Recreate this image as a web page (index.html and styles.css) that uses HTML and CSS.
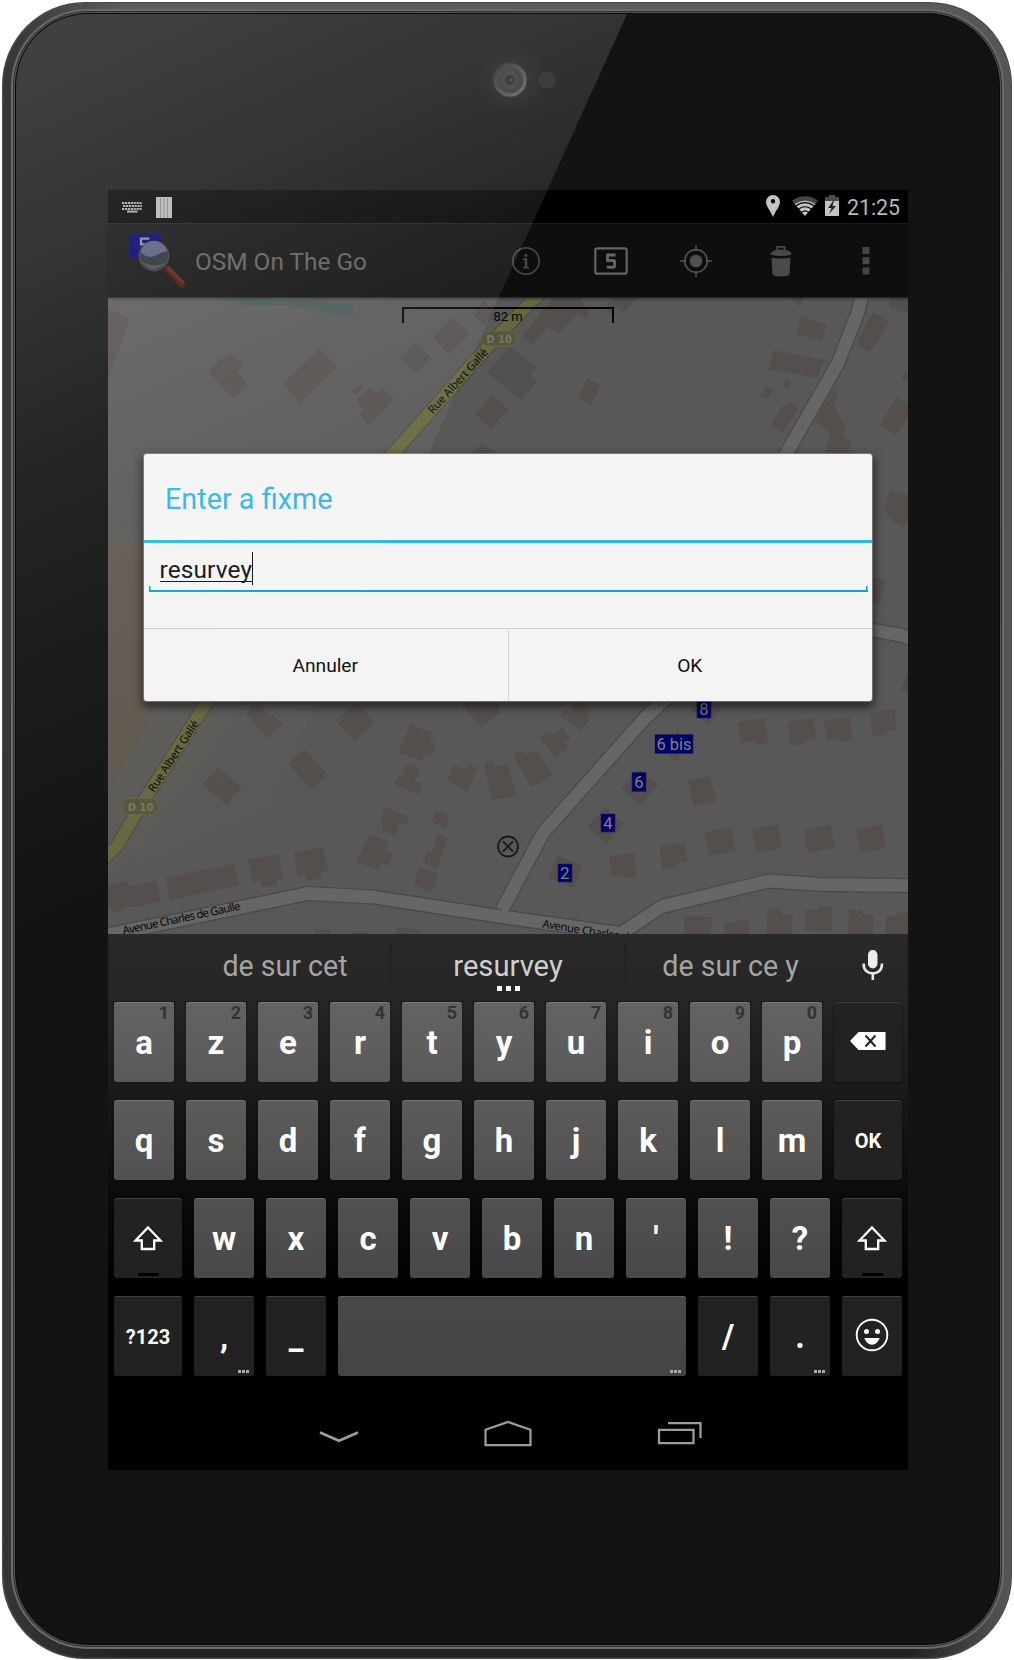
FILE: index.html
```html
<!DOCTYPE html>
<html lang="fr">
<head>
<meta charset="utf-8">
<title>OSM On The Go</title>
<link rel="stylesheet" href="styles.css">
</head>
<body>
<div class="tablet">
<div class="bezel">
<div class="glass">
  <div class="camera-row">
    <svg class="camera" width="120" height="100" viewBox="450 30 120 100">
      <defs>
        <radialGradient id="halo"><stop offset=".4" stop-color="#fff" stop-opacity=".04"/><stop offset="1" stop-color="#fff" stop-opacity="0"/></radialGradient>
        <linearGradient id="lensRing" x1="0" y1="0" x2="1" y2="1"><stop offset="0" stop-color="#262626"/><stop offset=".35" stop-color="#3a3a3a"/><stop offset="1" stop-color="#626262"/></linearGradient>
      </defs>
      <circle cx="512" cy="80" r="34" fill="url(#halo)"/>
      <circle cx="510" cy="80" r="17.5" fill="#262626"/>
      <circle cx="510" cy="80" r="15" fill="#333" stroke="url(#lensRing)" stroke-width="3"/>
      <circle cx="510" cy="80" r="10" fill="#363636" stroke="#2c2c2c"/>
      <circle cx="510" cy="80" r="4.5" fill="#1e1e1e"/>
      <circle cx="511" cy="80" r="2" fill="#383838"/>
      <circle cx="547" cy="80" r="8.5" fill="#212121"/>
    </svg>
  </div>

  <div class="screen">
    <header class="status">
      <svg class="st-kbd" width="20" height="12" viewBox="0 0 20 12" fill="none" stroke="#a6a6a6" stroke-width="2">
        <path d="M0 2h20" stroke-dasharray="2.2 .7"/><path d="M1 5h19" stroke-dasharray="2.2 .7"/><path d="M0 8h20" stroke-dasharray="2.2 .7"/><path d="M5 10.6h10.500"/>
      </svg>
      <svg class="st-bars" width="16" height="21" viewBox="0 0 16 21"><path fill="#b4b4b4" d="M0 0h16v21H0z"/><path stroke="#777" stroke-width=".8" d="M4.500 1v20M8 1v20M11.500 1v20"/></svg>
      <span class="spacer"></span>
      <svg class="st-pin" width="14" height="22" viewBox="0 0 14 22"><path fill="#c4c4c4" fill-rule="evenodd" d="M7 0a7 7 0 0 1 7 7c0 4-4 8-7 15C4 15 0 11 0 7a7 7 0 0 1 7-7zm0 4a2.200 2.200 0 1 0 0 4.400A2.200 2.200 0 0 0 7 4z"/></svg>
      <svg class="st-wifi" width="26" height="20" viewBox="0 0 26 20">
        <path fill="#454545" d="M0 4.500Q13-4 26 4.500L23 8.500Q13 1 3 8.500z"/>
        <path fill="#c4c4c4" d="M2.700 8Q13 .8 23.300 8L13 20z"/>
        <path fill="none" stroke="#000" stroke-width="1.200" d="M4 9.800Q13 3.500 22 9.800M6.700 13Q13 8.500 19.300 13M9.500 16.300Q13 13.500 16.500 16.300"/>
      </svg>
      <svg class="st-batt" width="14" height="21" viewBox="0 0 14 21"><path fill="#4a4a4a" d="M4 0h6v2h4v5H0V2h4z"/><path fill="#c4c4c4" d="M0 6h14v15H0z"/><path fill="#222" d="M9.500 4 3 13h3.500L4 19l7-8H7.500z"/></svg>
      <span class="clock">21:25</span>
    </header>

    <div class="actionbar">
      <svg class="app-icon" width="62" height="60" viewBox="78 150 186 180">
        <rect x="85" y="159" width="100" height="78" rx="4" fill="#00006a" stroke="#101018" stroke-width="4"/>
        <path d="M148 176h-25v17h20q5 0 5 7v12q0 8-8 8" fill="none" stroke="#858590" stroke-width="7"/>
        <circle cx="162" cy="228" r="44" fill="#272f33" fill-opacity=".93" stroke="#453733" stroke-width="4"/>
        <path d="M122 216a41 41 0 0 1 80-2q-20 3-34 12-24 14-46-10z" fill="#535c7c"/>
        <path d="M122 242q38 50 79 1-35 28-79-1z" fill="#434c50"/>
        <path d="M204 268l42 44" stroke="#3c1006" stroke-width="22" stroke-linecap="round"/>
        <path d="M205 264l43 44" stroke="#5a1e10" stroke-width="10" stroke-linecap="round"/>
      </svg>
      <span class="app-title">OSM On The Go</span>
      <span class="act"><svg width="30" height="30" viewBox="0 0 30 30"><circle cx="15" cy="15" r="13.200" fill="none" stroke="#474747" stroke-width="1.700"/><path fill="#474747" d="M13.700 8h2.600v2.800h-2.600zM12 12.300h4.200V21H18v1.500h-6V21h1.700v-7H12z"/></svg></span>
      <span class="act"><svg width="34" height="28" viewBox="0 0 34 28"><rect x="1.300" y="1.300" width="31.400" height="25.400" rx="2" fill="none" stroke="#646464" stroke-width="2.200"/><path d="M21.500 8h-8v5.500H19q1.700 0 1.700 1.800v3q0 1.900-1.700 1.900h-6.200" fill="none" stroke="#646464" stroke-width="2.900"/></svg></span>
      <span class="act"><svg width="32" height="32" viewBox="0 0 32 32"><circle cx="16" cy="16" r="11.300" fill="none" stroke="#505050" stroke-width="1.700"/><circle cx="16" cy="16" r="6.300" fill="#505050"/><path stroke="#505050" stroke-width="1.600" d="M16 0v6M16 26v6M0 16h6M26 16h6"/></svg></span>
      <span class="act"><svg width="22" height="32" viewBox="0 0 22 32"><path fill="#4a4a4a" fill-rule="evenodd" d="M6.500 5V1h9v4q6 1 6 4.500Q16 11 11 11T.5 9.500Q.5 6 6.500 5zM8.300 4.700h5.400V2.700H8.300z"/><path fill="#4a4a4a" d="M1.500 12.800q9.500 1.400 19 0L19.600 29q-1 2.500-8.600 2.500T2.400 29z"/></svg></span>
      <span class="act"><svg width="8" height="28" viewBox="0 0 8 28"><path fill="#454545" d="M.5 0h7v7h-7zM.5 10.300h7v7h-7zM.5 20.500h7v7h-7z"/></svg></span>
    </div>

    <main class="map-area">
      <svg class="map" width="800" height="636" viewBox="108 298 800 636">
        <path fill="#585858" d="M108 298h800v636H108z"/>
        <path fill="#5c5a57" d="M108 525 143 538 290 640 243 702 143 849 108 877z"/>
        <path fill="#5f584f" d="M108 545H205V640L160 702 108 792z"/>
        <g fill="#544e4d">
          <!-- north-west blocks -->
          <g transform="translate(100 180) scale(.33333)">
            <path fill="#475656" d="M360 354 440 378 570 376 705 402 772 402 742 370 560 358z"/>
            <path d="M24 388 90 414 24 600zM325 577 358 540 396 520 430 555 412 576 440 612 400 655zM548 612 658 507 710 562 602 670zM1000 472 1058 412 1108 462 1048 522zM770 658 812 622 828 640 852 628 882 662 805 735 778 702 790 688zM758 632 782 612 792 622 770 643zM1127 703 1178 645 1225 690 1172 747zM1118 405 1150 362 1190 400 1150 434zM1110 822 1148 789 1186 822z"/>
            <path fill="#52504e" d="M900 533 946 488 996 538 948 580z"/>
            <path fill="#505050" d="M1160 575 1230 500 1310 560 1290 590 1312 605 1262 662z"/>
          </g>
          <!-- north-east blocks -->
          <g transform="translate(500 180) scale(.33333)">
            <path d="M68 467 160 354 240 354 270 405 255 414 235 395 165 455 145 440 97 494zM320 380 340 354H415L370 400 350 380 330 405zM262 596 302 614 275 675 234 656zM0 665 24 688 0 712zM905 408 980 435 965 482 890 460zM820 510 974 540 950 594 807 568zM780 648 797 618 825 625 803 658zM813 735 845 680 875 667 894 685 850 757zM1118 397 1168 424 1128 490 1082 462zM1170 354H1224V398L1170 384zM1190 652 1224 668V715L1188 766 1140 735zM1218 570 1224 608 1204 595zM1000 628 1018 642 1000 672 1020 710 1037 745 1025 765 1055 785 1042 822H975L992 760 945 720zM868 354H912L900 380z"/>
            <path fill="#51504f" d="M165 455 218 405 235 395 180 460zM1082 462 1128 490 1112 515 1070 492zM855 598 870 606 866 630 852 622z"/>
          </g>
          <!-- east edge -->
          <g transform="translate(500 440) scale(.33333)">
            <path d="M985 0H1055L1040 28 1070 42H975zM1170 150 1224 164V235L1212 263Q1160 240 1160 210L1152 202zM1117 410 1158 420 1138 492 1117 486zM1224 695V762L1202 750zM220 810 232 784 272 810z"/>
          </g>
          <!-- south-west blocks -->
          <g transform="translate(100 680) scale(.33333)">
            <path d="M440 102 470 66 508 110 522 106 548 132 502 173zM708 122 768 66 826 128 764 183zM1083 70 1195 66 1198 98 1145 144zM930 132 997 158 986 184 1006 192 992 228 972 222 964 244 896 216zM565 250 614 208 683 285 634 329zM308 314 354 262 424 322 380 375zM918 252 961 268 944 303 967 312 958 343 882 314 895 285 908 287zM1060 254 1096 270 1106 254 1132 264 1103 335 1068 318 1043 298zM1152 250 1180 242 1186 260 1224 254 1230 350 1175 360zM855 382 929 411 918 437 900 430 884 468 844 450 850 430 840 424zM1010 392 1047 408 1036 443 994 426zM806 461 867 486 858 512 880 518 866 558 844 550 837 571 770 546zM1014 461 1044 474 1012 564 969 548 984 512 996 516zM960 562 1016 582 998 635 940 612zM582 518 668 500 685 570 665 576 666 594 620 603 614 584 594 588zM444 538 536 521 549 592 530 597 532 614 486 623 482 603 456 608zM198 592 402 551 416 616 210 660zM24 614 80 603 88 618 170 602 182 664 100 682 76 680 78 690 38 696 24 680zM645 748 690 750 692 762H645zM890 744 962 748V762H890zM758 756H808V762H758z"/>
          </g>
          <!-- south-east blocks -->
          <g transform="translate(500 680) scale(.33333)">
            <path d="M228 66 272 84 260 104 270 116 244 154 180 108 196 88 212 96zM118 176 140 155 162 166 184 143 212 174 194 190 204 200 170 232zM38 224 66 210 76 224 112 210 158 286 92 321zM0 262 24 255 50 345 0 354zM714 127 794 115 803 188 765 195 763 184 723 190zM862 126 940 115 949 178 912 182 914 190 873 197zM972 124 1050 110 1058 180 1022 186 1020 176 981 181zM1110 100 1184 88 1191 150 1158 156 1160 163 1118 170zM565 300 628 289 635 314 642 330 650 365 579 378 572 338zM575 90 600 66 668 80 622 138zM500 215 532 150 562 200 525 247zM364 326 418 266 475 314 420 375zM263 440 315 384 372 432 319 492zM172 525 246 556 220 622 145 594zM327 530 402 519 411 590 372 595 368 584 335 589zM479 498 556 486 563 545 528 550 530 562 487 569zM613 458 694 442 706 512 627 527zM756 448 834 432 846 504 768 518zM912 450 992 435 1004 504 923 520zM1068 447 1145 432 1158 504 1080 518zM555 706 637 712 632 762H552zM672 730 712 730V720L750 722 748 762H672zM804 685 845 690 843 702 878 706 874 762H798zM915 690 955 692V678L996 682V755L914 750zM1048 687 1086 692V702L1123 706 1118 762H1044zM1160 706 1195 708V698L1224 700V762H1155z"/>
          </g>
        </g>
        <g fill="none" stroke-linejoin="round">
          <path stroke="#484848" stroke-width="15.200" d="M863 290 858 312 838 363 786 454 771 480M872 630 900 635 912 639M682 684 645 718 543 833 502 910M100 936.500 308 893.500 373 897 500 916.500 625 934M620 934 662 906.500 769 881 820 884.300 912 885.700"/>
          <path stroke="#666" stroke-width="12.800" d="M863 290 858 312 838 363 786 454 771 480M872 630 900 635 912 639M682 684 645 718 543 833 502 910M100 936.500 308 893.500 373 897 500 916.500 625 934M620 934 662 906.500 769 881 820 884.300 912 885.700"/>
          <path stroke="#4a4a48" stroke-width="14" d="M541 292 500 333 393.500 453 371 478M218 684 207 702 143 802 117 846 100 862"/>
          <path stroke="#67673f" stroke-width="12" d="M541 292 500 333 393.500 453 371 478M218 684 207 702 143 802 117 846 100 862"/>
        </g>
        <g class="road-label">
          <text transform="translate(433 414.500) rotate(-48)" textLength="83">Rue Albert Gallé</text>
          <text transform="translate(154 793) rotate(-57)" textLength="83">Rue Albert Gallé</text>
          <text transform="translate(123.500 934.500) rotate(-12)" textLength="120">Avenue Charles de Gaulle</text>
          <text transform="translate(542 927.500) rotate(9)" textLength="127">Avenue Charles de Gaulle</text>
        </g>
        <g class="shield">
          <rect x="481" y="331" width="36" height="15" rx="7.500"/><text x="499" y="342.500">D 10</text>
          <rect x="121.500" y="798.500" width="37" height="16" rx="8"/><text x="140.500" y="811">D 10</text>
        </g>
        <g class="house">
          <rect x="697" y="700" width="14" height="18"/><text x="704" y="715">8</text>
          <rect x="655" y="734.500" width="38" height="19"/><text x="674" y="750">6 bis</text>
          <rect x="632" y="772.500" width="14" height="19"/><text x="639" y="788">6</text>
          <rect x="601" y="814" width="14" height="18"/><text x="608" y="829">4</text>
          <rect x="558" y="864" width="14" height="18"/><text x="565" y="879">2</text>
        </g>
        <g fill="none" stroke="#1b1b1b" stroke-width="1.800"><circle cx="508" cy="846.500" r="10"/><path d="M503 841.500l10 10M513 841.500l-10 10"/></g>
        <path fill="none" stroke="#050505" stroke-width="2" d="M403 323V308H613V323"/>
        <text class="scale" x="508" y="321">82 m</text>
      </svg>

      <section class="dialog">
        <h1 class="dialog-title">Enter a fixme</h1>
        <div class="dialog-body">
          <div class="field"><span class="value">resurvey</span><i class="caret"></i></div>
        </div>
        <div class="buttons"><span class="btn">Annuler</span><span class="btn">OK</span></div>
      </section>
    </main>

    <section class="keyboard">
      <div class="suggest">
        <span class="sg first">de sur cet</span>
        <span class="sg main">resurvey<svg class="dots" width="23" height="5" viewBox="0 0 23 5"><path fill="#fff" d="M0 0h5v5H0zM9 0h5v5H9zM18 0h5v5h-5z"/></svg></span>
        <span class="sg last">de sur ce y</span>
        <svg class="mic" width="22" height="30" viewBox="0 0 22 30"><rect x="6" y="0" width="9.500" height="18.500" rx="4.700" fill="#eee"/><path d="M1.700 13.500v1.200c0 11.500 18.200 11.500 18.200 0v-1.200M10.800 23.500V30" fill="none" stroke="#e6e6e6" stroke-width="2.600"/></svg>
      </div>
      <div class="row r1">
        <span class="key"><sup>1</sup>a</span><span class="key"><sup>2</sup>z</span><span class="key"><sup>3</sup>e</span><span class="key"><sup>4</sup>r</span><span class="key"><sup>5</sup>t</span><span class="key"><sup>6</sup>y</span><span class="key"><sup>7</sup>u</span><span class="key"><sup>8</sup>i</span><span class="key"><sup>9</sup>o</span><span class="key"><sup>0</sup>p</span>
        <span class="key fn wide icon"><svg width="36" height="18" viewBox="0 0 36 18"><path fill="#fff" d="M0 9 8.500 0H35.500v18H8.500z"/><path stroke="#222" stroke-width="2" d="M15.500 3.500l10 11M25.500 3.500l-10 11"/></svg></span>
      </div>
      <div class="row r2">
        <span class="key">q</span><span class="key">s</span><span class="key">d</span><span class="key">f</span><span class="key">g</span><span class="key">h</span><span class="key">j</span><span class="key">k</span><span class="key">l</span><span class="key">m</span><span class="key fn wide small">OK</span>
      </div>
      <div class="row r3">
        <span class="key fn wide shift"><svg width="32" height="26" viewBox="0 0 32 26"><path fill="none" stroke="#fff" stroke-width="2.300" d="M16 2.500 28.500 15.500H22.200V24H9.800V15.500H3.500z"/></svg></span><span class="key">w</span><span class="key">x</span><span class="key">c</span><span class="key">v</span><span class="key">b</span><span class="key">n</span><span class="key">'</span><span class="key">!</span><span class="key">?</span><span class="key fn shift"><svg width="32" height="26" viewBox="0 0 32 26"><path fill="none" stroke="#fff" stroke-width="2.300" d="M16 2.500 28.500 15.500H22.200V24H9.800V15.500H3.500z"/></svg></span>
      </div>
      <div class="row r4">
        <span class="key fn wide small">?123</span><span class="key fn more">,</span><span class="key fn">_</span><span class="key space more"></span><span class="key fn">/</span><span class="key fn more">.</span>
        <span class="key fn icon"><svg width="34" height="34" viewBox="0 0 34 34"><circle cx="17" cy="17" r="15.300" fill="none" stroke="#fff" stroke-width="1.900"/><circle cx="11.500" cy="13.500" r="2.500" fill="#fff"/><circle cx="22.500" cy="13.500" r="2.500" fill="#fff"/><path fill="#fff" d="M9.300 20h15.400q-2.500 6.700-7.700 6.700T9.300 20z"/></svg></span>
      </div>
    </section>

    <nav class="navbar">
      <svg class="hide-kbd" width="40" height="14" viewBox="0 0 40 14"><path fill="none" stroke="#9c9c9c" stroke-width="2.800" d="M1 2.500 20 10.800 39 2.500"/></svg>
      <svg width="48" height="27" viewBox="0 0 48 27"><path fill="none" stroke="#9c9c9c" stroke-width="2.200" d="M1.500 25.200V9.800L24 2l22.500 7.800v15.400z"/></svg>
      <svg width="46" height="24" viewBox="0 0 46 24"><path fill="none" stroke="#9c9c9c" stroke-width="2.300" d="M2 8.800h34.500v13.400H2zM11 2.200h32.500V17"/></svg>
    </nav>
  </div>
</div>
</div>
<svg class="gloss" width="1014" height="1660" viewBox="0 0 1014 1660">
  <defs>
    <linearGradient id="shine" gradientUnits="userSpaceOnUse" x1="0" y1="0" x2="351" y2="790">
      <stop offset="0" stop-color="#fff" stop-opacity=".205"/><stop offset=".28" stop-color="#fff" stop-opacity=".145"/><stop offset=".52" stop-color="#fff" stop-opacity=".075"/><stop offset=".77" stop-color="#fff" stop-opacity=".03"/><stop offset="1" stop-color="#fff" stop-opacity="0"/>
    </linearGradient>
  </defs>
  <path fill="url(#shine)" d="M88 14H627L90 1202 16 1366V86A72 72 0 0 1 88 14z"/>
</svg>
</div>
</body>
</html>
```

FILE: styles.css
```css
* { box-sizing: border-box; }
body {
  margin: 0;
  width: 1014px;
  height: 1660px;
  background: #fff;
  font-family: Roboto, "Liberation Sans", sans-serif;
  overflow: hidden;
}
svg { display: block; flex: none; }

/* Tablet shell */
.tablet { position: relative; width: 1014px; height: 1660px; padding: 2px; }
.bezel {
  height: 1657px;
  padding: 12px 13px 15px 14px;
  border-radius: 83px;
  background: linear-gradient(90deg, #343636, rgba(70,70,70,0) 12%, rgba(70,70,70,0) 90%, #565656),
              linear-gradient(180deg, #5c5c5c, #444 8%, #3a3a3a 90%, #222 99%);
  box-shadow: inset 0 0 0 1px #4a4a4a, inset 0 0 2px 1px #555;
}
.glass {
  height: 1630px;
  border-radius: 72px;
  background: #131313;
  box-shadow: 0 0 0 1px #0a0a0a, 0 0 0 2px #555, 0 0 0 3px #303030, 0 0 0 5px #6a6a6a;
  display: flex;
  flex-direction: column;
}
.camera-row { height: 176px; padding: 16px 0 0 434px; flex: none; }
.gloss { position: absolute; left: 0; top: 0; z-index: 2; pointer-events: none; }

.screen {
  width: 800px;
  height: 1280px;
  margin-left: 92px;
  display: flex;
  flex-direction: column;
  background: #000;
  flex: none;
}

/* Status bar */
.status { height: 33px; display: flex; align-items: center; padding: 1px 8px 0 14px; flex: none; }
.st-bars { margin-left: 14px; }
.spacer { flex: 1; }
.st-pin { margin: -3px 12px 0 0; }
.st-wifi { margin: -2px 7px 0 0; }
.st-batt { margin: -3px 8px 0 0; }
.clock { font-size: 21.300px; line-height: 32px; color: #b8b8b8; padding-top: 2px; }

/* Action bar */
.actionbar {
  height: 75px;
  display: flex;
  align-items: center;
  flex: none;
  background: #0e0e0e;
  border-top: 1px solid #1b1b1b;
  border-bottom: 1px solid #262626;
  box-shadow: 0 1px 3px rgba(0,0,0,.4);
  position: relative;
  z-index: 1;
}
.app-icon { margin: -1px 7px 0 18px; }
.app-title { flex: 1; font-size: 24.400px; color: #5e5e5e; padding-top: 2px; }
.act { width: 85px; display: flex; justify-content: center; }

/* Map */
.map-area { position: relative; height: 636px; flex: none; }
.road-label { font: 11.300px "Noto Sans", sans-serif; fill: #080808; }
.shield rect { fill: #56563a; stroke: #666645; stroke-width: 1; }
.shield text { font: bold 10px "DejaVu Sans", sans-serif; fill: #77776a; text-anchor: middle; }
.house rect { fill: #000066; stroke: #222255; stroke-width: .6; }
.house text { font-size: 16.500px; fill: #828282; text-anchor: middle; }
.scale { font-size: 13px; fill: #050505; text-anchor: middle; }

/* Dialog */
.dialog {
  position: absolute;
  left: 36px;
  top: 156px;
  width: 728px;
  height: 247px;
  border-radius: 3px;
  background: #f4f4f4;
  box-shadow: 0 0 1px 1px rgba(180,180,180,.5), 0 4px 10px 2px rgba(0,0,0,.6);
  display: flex;
  flex-direction: column;
}
.dialog-title {
  margin: 0;
  height: 89px;
  padding: 4px 0 0 21px;
  border-bottom: 3px solid #33b5e5;
  font-size: 28.800px;
  font-weight: 400;
  line-height: 82px;
  color: #33b5e5;
}
.dialog-body { height: 85px; padding: 9px 4.500px 0; }
.field {
  height: 40px;
  padding-left: 11px;
  display: flex;
  border-bottom: 2px solid #12a0d8;
  background: linear-gradient(#12a0d8, #12a0d8) 0 100%/1.500px 4px no-repeat,
              linear-gradient(#12a0d8, #12a0d8) 100% 100%/1.500px 4px no-repeat;
}
.value {
  font-size: 24.400px;
  letter-spacing: .15px;
  line-height: 36px;
  color: #111;
  height: 30px;
  border-bottom: 1.500px solid #111;
}
.caret { width: 1px; height: 33px; background: #111; }
.buttons { height: 73px; border-top: 1px solid #cfcfcf; display: flex; }
.btn { flex: 1; text-align: center; font-size: 19.200px; line-height: 74px; color: #111; padding-right: 1px; }
.btn + .btn { border-left: 1px solid #d4d4d4; }

/* Keyboard */
.keyboard {
  height: 462px;
  flex: none;
  background: linear-gradient(#292929 0, #262626 60px, #1a1a1a 155px, #0c0c0c 257px, #000 355px);
  padding: 0 6px;
}
.suggest { height: 68px; display: flex; align-items: flex-start; }
.sg {
  font-size: 28.600px;
  line-height: 47px;
  height: 43px;
  margin-top: 9px;
  text-align: center;
  color: #a4a4a4;
}
.first { width: 276px; padding-left: 66px; }
.main { width: 236px; border: solid #1d1d1d; border-width: 0 1px; color: #cfcfcf; font-size: 29.200px; }
.dots { margin: -4px auto 0; }
.last { width: 208px; padding-left: 1px; }
.mic { margin: 16px 0 0 28px; }
.row { height: 80px; margin-bottom: 18px; display: flex; gap: 12px; }
.key {
  position: relative;
  width: 60px;
  border-radius: 3px;
  display: flex;
  align-items: center;
  justify-content: center;
  font-size: 33px;
  font-weight: 700;
  color: #fff;
  padding-top: 1px;
  box-shadow: inset 0 1px 0 rgba(255,255,255,.14), 0 0 1px 1px rgba(0,0,0,.25);
}
.key sup { position: absolute; right: 5px; top: 2px; font-size: 18px; line-height: 18px; color: #333; }
.r1 .key { background: linear-gradient(#636363, #5a5a5a); }
.r2 .key { background: linear-gradient(#5b5b5b, #515151); }
.r3 .key { background: linear-gradient(#515151, #484848); }
.r4 .key { background: linear-gradient(#484848, #444); }
.row .fn { background: #222; }
.wide { width: 68px; }
.space { width: 348px; }
.small { font-size: 20px; }
.shift { padding-bottom: 2px; }
.icon { padding: 0 0 2px; }
.shift::after {
  content: "";
  position: absolute;
  bottom: 2px;
  left: calc(50% - 10.500px);
  width: 21px;
  height: 3px;
  background: #000;
}
.more::after {
  content: "";
  position: absolute;
  right: 5px;
  bottom: 3px;
  width: 11px;
  height: 3px;
  background: repeating-linear-gradient(90deg, #aaa 0 3px, transparent 3px 4px);
}

/* Navigation bar */
.navbar { height: 74px; display: flex; align-items: center; flex: none; padding: 0 205px 0 211px; justify-content: space-between; }
.hide-kbd { margin-top: 7px; }
```
